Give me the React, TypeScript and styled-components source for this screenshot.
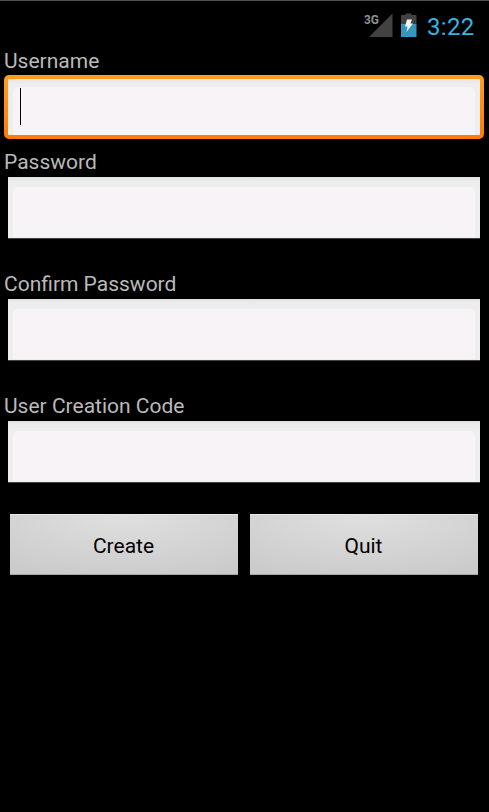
import React from "react";
import styled, { createGlobalStyle, css } from "styled-components";

const GlobalStyle = createGlobalStyle`
  * { box-sizing: border-box; }
  html, body { margin: 0; background: #000; }
  body { font-family: Roboto, "Noto Sans", sans-serif; }
`;

const Screen = styled.main`
  width: 489px;
  height: 812px;
  overflow: hidden;
  background: #000;
  border-top: 1px solid #505050;
`;

const StatusBar = styled.header`
  display: flex;
  align-items: flex-start;
  height: 46px;
  padding: 11px 14px 0 0;
  justify-content: flex-end;
`;

const StatusIcons = styled.svg`
  display: block;
  width: 54px;
  height: 28px;
  margin-right: 9px;
`;

const Clock = styled.time`
  width: 48px;
  font-size: 24px;
  line-height: 30px;
  letter-spacing: 0.3px;
  white-space: nowrap;
  color: #33b5e5;
`;

const Form = styled.form`
  display: flex;
  flex-direction: column;
`;

const Field = styled.div<{ $focused?: boolean }>`
  height: ${(p) => (p.$focused ? 101 : 122)}px;
`;

const Label = styled.label`
  display: block;
  height: 28px;
  padding: 1px 0 0 4px;
  font-size: 21px;
  line-height: 27px;
  color: #bababa;
`;

const TextBox = styled.div<{ $focused?: boolean }>`
  display: flex;
  width: 472px;
  height: 62px;
  margin: 1px 0 0 8px;
  padding: 10px 5px 1px;
  border-bottom: 1px solid #444;
  background: linear-gradient(#dedede, #ebebeb 3px, #eeeeee 10px, #eeeeee);
  ${(p) =>
    p.$focused &&
    css`
      width: 480px;
      height: 64px;
      margin: 0 0 0 4px;
      padding: 8px 5px 0;
      border: 4px solid transparent;
      border-radius: 5px;
      background:
        linear-gradient(#e6e6e9, #eeeeee 5px, #eeeeee) padding-box,
        linear-gradient(#ff9d27, #ff7b08) border-box;
    `}
`;

const Inset = styled.div`
  display: flex;
  flex: 1;
  padding: 1px 0 0 7px;
  border-radius: 5px 5px 0 0;
  background: #f7f3f7;
`;

const Caret = styled.span`
  width: 1px;
  height: 37px;
  background: #000;
`;

const Actions = styled.div`
  display: flex;
  gap: 12px;
  padding: 0 10px;
`;

const Button = styled.button`
  width: 228px;
  height: 61px;
  padding: 4px 1px 0 0;
  border: 0;
  border-radius: 1px;
  font: 21px/27px Roboto, "Noto Sans", sans-serif;
  color: #000;
  background: radial-gradient(ellipse 190px 66px at 50% 0, #e0e0e0, #d0cfd0 80%, #c5c5c5 130%);
  box-shadow: inset 0 1px #e9e9e9, inset 0 -1px #a6a6a6;
`;

const fields = [
  { name: "Username", focused: true },
  { name: "Password", focused: false },
  { name: "Confirm Password", focused: false },
  { name: "User Creation Code", focused: false },
];

function DeviceStatus() {
  return (
    <StatusIcons viewBox="0 0 54 28" aria-label="3G signal, battery charging">
      <path d="M28.5 1.5V25H5z" fill="#424242" />
      <text x="0" y="12" fontSize="13.5" fontWeight="700" fill="#909090" textLength="15" lengthAdjust="spacingAndGlyphs">3G</text>
      <path d="M41.5 1.5h6V3h5v9H37V3h4.5z" fill="#424242" />
      <path d="M37 12h15.5v13H37z" fill="#3596bd" />
      <path d="M43 7.5h5l-1.5 4H49L42.5 20l1-5.5H41z" fill="#f2f4f5" />
    </StatusIcons>
  );
}

export default function App() {
  return (
    <>
      <GlobalStyle />
      <Screen>
        <StatusBar>
          <DeviceStatus />
          <Clock>3:22</Clock>
        </StatusBar>
        <Form>
          {fields.map(({ name, focused }) => (
            <Field key={name} $focused={focused}>
              <Label>{name}</Label>
              <TextBox $focused={focused} role="textbox" aria-label={name}>
                <Inset>{focused && <Caret />}</Inset>
              </TextBox>
            </Field>
          ))}
          <Actions>
            <Button type="button">Create</Button>
            <Button type="button">Quit</Button>
          </Actions>
        </Form>
      </Screen>
    </>
  );
}
